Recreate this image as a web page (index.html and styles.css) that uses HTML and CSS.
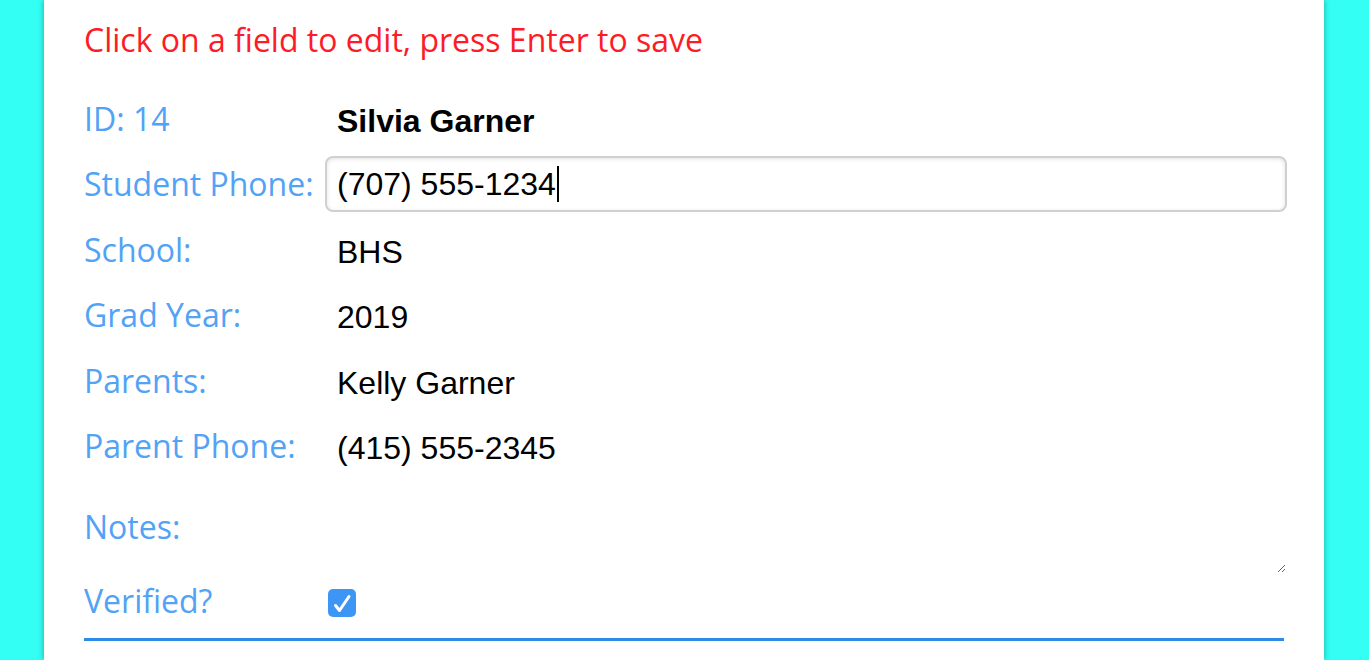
FILE: index.html
```html
<!DOCTYPE html>
<html lang="en">
<head>
<meta charset="utf-8">
<title>Student</title>
<link rel="stylesheet" href="styles.css">
</head>
<body>
<div class="card">
  <p class="hint">Click on a field to edit, press Enter to save</p>
  <div class="form">
    <div class="label">ID: 14</div>
    <div class="value name">Silvia Garner</div>

    <div class="label">Student Phone:</div>
    <div class="value"><div class="input">(707) 555-1234<span class="caret"></span></div></div>

    <div class="label">School:</div>
    <div class="value">BHS</div>

    <div class="label">Grad Year:</div>
    <div class="value">2019</div>

    <div class="label">Parents:</div>
    <div class="value">Kelly Garner</div>

    <div class="label">Parent Phone:</div>
    <div class="value">(415) 555-2345</div>

    <div class="label">Notes:</div>
    <div class="value notes"><textarea class="notes-area"></textarea></div>

    <div class="label">Verified?</div>
    <div class="value check-cell">
      <span class="check">
        <svg width="28" height="28" viewBox="0 0 28 28"><path d="M7.5 16.5 L11.5 21.5 L21 7.5" fill="none" stroke="#fff" stroke-width="3" stroke-linecap="round" stroke-linejoin="round"/></svg>
      </span>
    </div>
  </div>
  <div class="rule"></div>
</div>
</body>
</html>
```

FILE: styles.css
```css
html, body {
  margin: 0;
  padding: 0;
}
body {
  background: #33fff5;
  height: 660px;
  overflow: hidden;
}
.card {
  background: #fff;
  margin: 0 45px 0 44px;
  padding: 18px 40px 40px 40px;
  height: 602px;
  box-shadow: 0 0 6px rgba(0, 0, 0, 0.35);
}
.hint {
  margin: 0 0 36px 0;
  color: #fd1b25;
  font-family: "Open Sans", sans-serif;
  font-size: 32px;
  line-height: 44px;
}
.form {
  display: grid;
  grid-template-columns: 241px 1fr;
  grid-template-rows: repeat(5, 65.4px) 81px 74px 58px;
}
.label {
  color: #52a2f6;
  font-family: "Open Sans", sans-serif;
  font-size: 32px;
  line-height: 42px;
  white-space: nowrap;
}
.value {
  font-family: "Liberation Sans", Arial, sans-serif;
  font-size: 32px;
  line-height: 42px;
  color: #000;
  padding-left: 12px;
  padding-top: 2px;
}
.name {
  font-weight: bold;
}
.input {
  margin: -9px -3px 0 -12px;
  height: 56px;
  box-sizing: border-box;
  border: 2px solid #d0d0d0;
  border-radius: 8px;
  padding: 2px 10px;
  box-shadow: inset 0 1px 4px rgba(0, 0, 0, 0.12);
  display: flex;
  align-items: center;
}
.caret {
  display: inline-block;
  width: 2px;
  height: 36px;
  background: #000;
  margin-left: 1px;
}
.form .notes {
  padding: 0;
}
.notes-area {
  display: block;
  box-sizing: border-box;
  width: calc(100% + 2px);
  height: 70px;
  margin: -3px 0 0 0;
  border: none;
  outline: none;
  resize: vertical;
  font: inherit;
  background: transparent;
}
.check-cell {
  padding: 9px 0 0 3px;
}
.check {
  display: block;
  width: 28px;
  height: 28px;
  background: #3d96f6;
  border-radius: 5px;
}
.check svg {
  display: block;
}
.rule {
  height: 3px;
  background: #2b8be8;
}
```
